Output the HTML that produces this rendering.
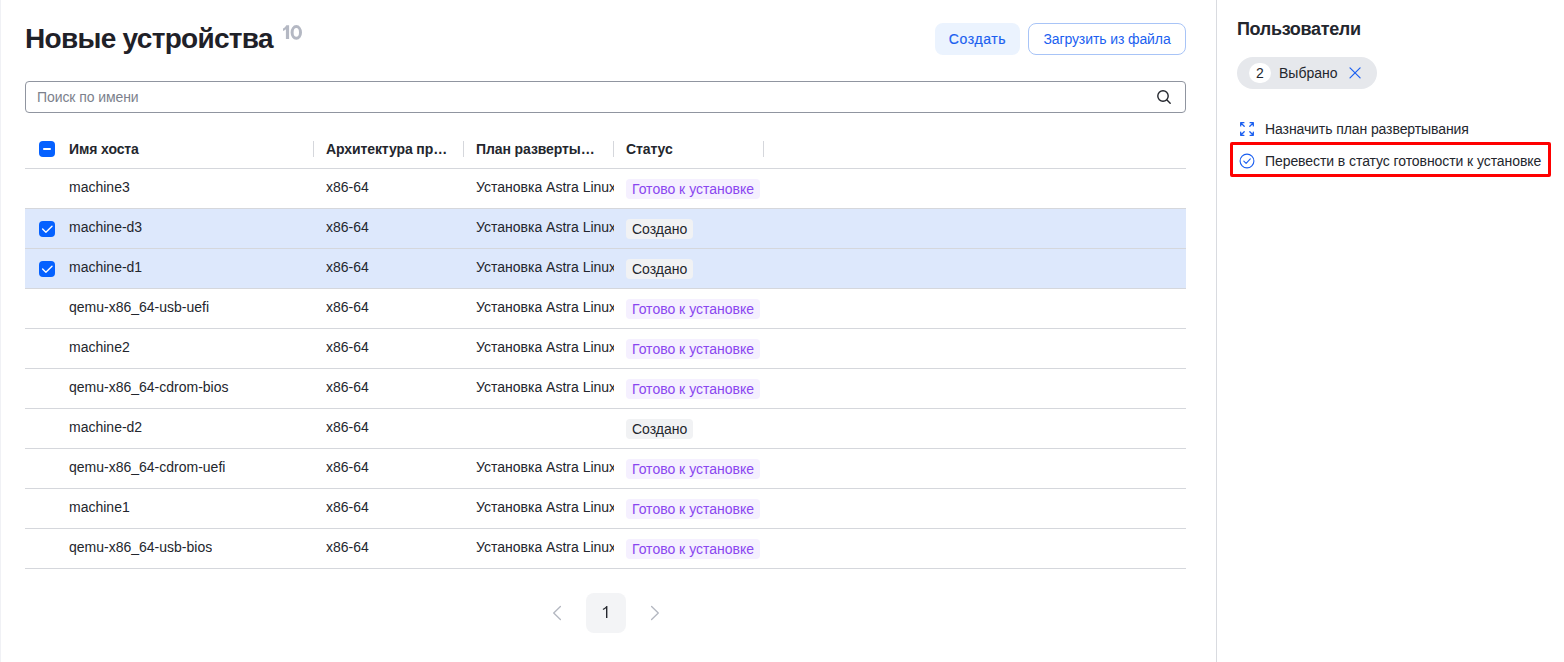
<!DOCTYPE html>
<html lang="ru">
<head>
<meta charset="utf-8">
<title>Новые устройства</title>
<style>
*{box-sizing:border-box;margin:0;padding:0}
html,body{width:1564px;height:662px;overflow:hidden;background:#fff}
body{font-family:"Liberation Sans",sans-serif;font-size:14px;color:#23262d;position:relative}
.abs{position:absolute}
#leftline{left:0;top:0;width:1px;height:662px;background:#f0f1f5}
#title{left:25px;top:21px;transform:scaleY(1.02);transform-origin:0 27px;font-size:28px;font-weight:700;line-height:36px;color:#1f2128;white-space:nowrap;letter-spacing:-0.7px}
#count{left:281px;top:22px;font-size:20px;font-weight:700;line-height:22px;color:#b3b8c2;letter-spacing:-0.5px}
.btn{top:23px;height:32px;border-radius:8px;font-size:14px;line-height:32px;text-align:center;color:#1b5ff0;white-space:nowrap}
#b1{left:935px;width:85px;background:#ebf3fe;letter-spacing:0.6px;-webkit-text-stroke:0.18px #1b5ff0}
#b2{left:1028px;width:158px;border:1px solid #a8c4f7;line-height:30px;background:#fff;letter-spacing:-0.1px}
#search{left:25px;top:81px;width:1161px;height:32px;border:1px solid #9095a0;border-radius:4px;background:#fff}
#search span{position:absolute;left:11px;top:0;line-height:30px;color:#7c818c;font-size:14px;letter-spacing:-0.08px;white-space:nowrap}
#search svg{position:absolute;right:13px;top:7px}
#thead{left:25px;top:129px;width:1161px;height:40px;border-bottom:1px solid #d5d7dc}
.th{position:absolute;top:0;height:40px;line-height:40px;font-weight:700;font-size:14px;color:#23262d;white-space:nowrap;letter-spacing:-0.1px}
.sep{position:absolute;top:12px;width:1px;height:16px;background:#d5d7dc}
.row{position:absolute;left:25px;width:1161px;height:40px;border-bottom:1px solid #d5d7dc}
.row.sel{background:#dde8fc}
.c{position:absolute;top:0;height:39px;line-height:37px;font-size:14px;color:#23262d;white-space:nowrap;overflow:hidden}
.c1{left:44px}
.c2{left:301px}
.c3{left:451px;width:138px}
.tag{position:absolute;left:601px;top:10px;height:20px;line-height:20px;border-radius:4px;padding:0 6px;font-size:14px;white-space:nowrap}
.tag.p{background:#f5f0ff;color:#8a46f0}
.tag.g{background:#f1f2f4;color:#23262d}
.cb{position:absolute;left:14px;width:16px;height:16px;border-radius:4px;background:#0561ff}
.cb svg{position:absolute;left:0;top:0}
#pg1{left:586px;top:593px;width:40px;height:40px;border-radius:8px;background:#f3f4f6;text-align:center;line-height:40px;font-size:16px;color:#23262d}
#vline{left:1216px;top:0;width:1px;height:662px;background:#d9dbe0}
#ptitle{left:1237px;top:18px;font-size:18px;font-weight:700;line-height:22px;color:#23262d;letter-spacing:-0.33px}
#chip{left:1237px;top:57px;width:140px;height:32px;border-radius:16px;background:#e6e8ec}
#chip .n{position:absolute;left:12px;top:6px;width:22px;height:20px;border-radius:10px;background:#fff;text-align:center;line-height:20px;font-size:14px}
#chip .t{position:absolute;left:42px;top:0;line-height:32px;font-size:14px}
#chip svg{position:absolute;left:111px;top:9px}
.act{font-size:14px;line-height:16px;color:#23262d;white-space:nowrap}
#red{left:1230px;top:142px;width:321px;height:35px;border:3px solid #fe0000;border-radius:2px}
</style>
</head>
<body>
<div id="leftline" class="abs"></div>
<div id="title" class="abs">Новые устройства</div>
<svg class="abs" style="left:280px;top:22px" width="26" height="20" viewBox="0 0 26 20"><path fill="#b4b8c3" d="M9.1 3.2H6.3C5.6 4.8 4.4 5.8 3 6.4V8.9C4.2 8.5 5.2 7.9 5.9 7.2V17.1H9.1Z"/><ellipse cx="16.3" cy="10.45" rx="4.2" ry="5.85" fill="none" stroke="#b4b8c3" stroke-width="3"/></svg>
<div id="b1" class="abs btn">Создать</div>
<div id="b2" class="abs btn">Загрузить из файла</div>

<div id="search" class="abs"><span>Поиск по имени</span>
<svg width="16" height="16" viewBox="0 0 16 16" fill="none" stroke="#23262d" stroke-width="1.4" stroke-linecap="round"><circle cx="7" cy="7" r="5.2"/><path d="M11 11l3.2 3.2"/></svg>
</div>

<div id="thead" class="abs">
  <div class="cb" style="top:12px"><svg width="16" height="16" viewBox="0 0 16 16"><path d="M4.9 8h6.2" stroke="#fff" stroke-width="1.8" stroke-linecap="round"/></svg></div>
  <div class="th" style="left:44px">Имя хоста</div>
  <div class="sep" style="left:288px"></div>
  <div class="th" style="left:301px">Архитектура пр…</div>
  <div class="sep" style="left:438px"></div>
  <div class="th" style="left:451px">План разверты…</div>
  <div class="sep" style="left:588px"></div>
  <div class="th" style="left:601px">Статус</div>
  <div class="sep" style="left:738px"></div>
</div>

<div class="row" style="top:169px"><div class="c c1">machine3</div><div class="c c2">x86-64</div><div class="c c3">Установка Astra Linux</div><div class="tag p">Готово к установке</div></div>
<div class="row sel" style="top:209px"><div class="cb" style="top:12px"><svg width="16" height="16" viewBox="0 0 16 16"><path d="M3.6 8.1L6.9 11.2L13 5.3" fill="none" stroke="#fff" stroke-width="1.4" stroke-linecap="round" stroke-linejoin="round"/></svg></div><div class="c c1">machine-d3</div><div class="c c2">x86-64</div><div class="c c3">Установка Astra Linux</div><div class="tag g">Создано</div></div>
<div class="row sel" style="top:249px"><div class="cb" style="top:12px"><svg width="16" height="16" viewBox="0 0 16 16"><path d="M3.6 8.1L6.9 11.2L13 5.3" fill="none" stroke="#fff" stroke-width="1.4" stroke-linecap="round" stroke-linejoin="round"/></svg></div><div class="c c1">machine-d1</div><div class="c c2">x86-64</div><div class="c c3">Установка Astra Linux</div><div class="tag g">Создано</div></div>
<div class="row" style="top:289px"><div class="c c1">qemu-x86_64-usb-uefi</div><div class="c c2">x86-64</div><div class="c c3">Установка Astra Linux</div><div class="tag p">Готово к установке</div></div>
<div class="row" style="top:329px"><div class="c c1">machine2</div><div class="c c2">x86-64</div><div class="c c3">Установка Astra Linux</div><div class="tag p">Готово к установке</div></div>
<div class="row" style="top:369px"><div class="c c1">qemu-x86_64-cdrom-bios</div><div class="c c2">x86-64</div><div class="c c3">Установка Astra Linux</div><div class="tag p">Готово к установке</div></div>
<div class="row" style="top:409px"><div class="c c1">machine-d2</div><div class="c c2">x86-64</div><div class="tag g">Создано</div></div>
<div class="row" style="top:449px"><div class="c c1">qemu-x86_64-cdrom-uefi</div><div class="c c2">x86-64</div><div class="c c3">Установка Astra Linux</div><div class="tag p">Готово к установке</div></div>
<div class="row" style="top:489px"><div class="c c1">machine1</div><div class="c c2">x86-64</div><div class="c c3">Установка Astra Linux</div><div class="tag p">Готово к установке</div></div>
<div class="row" style="top:529px"><div class="c c1">qemu-x86_64-usb-bios</div><div class="c c2">x86-64</div><div class="c c3">Установка Astra Linux</div><div class="tag p">Готово к установке</div></div>

<svg class="abs" style="left:549px;top:605px" width="16" height="16" viewBox="0 0 16 16" fill="none" stroke="#b3b7c0" stroke-width="1.3" stroke-linecap="round" stroke-linejoin="round"><path d="M11.4 1.5L4.7 8l6.7 6.5"/></svg>
<div id="pg1" class="abs"><svg width="40" height="40" viewBox="0 0 40 40" style="position:absolute;left:0;top:0"><path fill="#23262d" d="M21.4 12.9H20.4C19.8 14 18.5 15 16.9 15.7V17C18.1 16.6 19.3 16 20 15.2V25H21.4Z"/></svg></div>
<svg class="abs" style="left:647px;top:605px" width="16" height="16" viewBox="0 0 16 16" fill="none" stroke="#b3b7c0" stroke-width="1.3" stroke-linecap="round" stroke-linejoin="round"><path d="M4.6 1.5L11.3 8l-6.7 6.5"/></svg>

<div id="vline" class="abs"></div>
<div id="ptitle" class="abs">Пользователи</div>
<div id="chip" class="abs"><div class="n">2</div><div class="t">Выбрано</div>
<svg width="14" height="14" viewBox="0 0 14 14" fill="none" stroke="#1b5ff0" stroke-width="1.2" stroke-linecap="round"><path d="M2 1.8l10.1 10.1M12.1 1.8l-10.1 10.1"/></svg></div>

<svg class="abs" style="left:1240px;top:122px" width="14" height="14" viewBox="0 0 14 14" fill="none" stroke="#1b5ff0" stroke-width="1.3" stroke-linecap="round" stroke-linejoin="round"><path d="M0.7 3.9V0.7h3.2M0.7 0.7l3.5 3.5M13.3 3.9V0.7h-3.2M13.3 0.7l-3.5 3.5M0.7 10.1v3.2h3.2M0.7 13.3l3.5-3.5M13.3 10.1v3.2h-3.2M13.3 13.3l-3.5-3.5"/></svg>
<div class="abs act" style="left:1265px;top:121px;letter-spacing:-0.09px">Назначить план развертывания</div>

<svg class="abs" style="left:1239px;top:153px" width="16" height="16" viewBox="0 0 16 16" fill="none" stroke="#1b5ff0" stroke-width="1.1" stroke-linecap="round" stroke-linejoin="round"><circle cx="8" cy="8" r="6.9"/><path d="M4.8 8.1l2.3 2.3 4.2-4.5"/></svg>
<div class="abs act" style="left:1265px;top:153px;letter-spacing:-0.075px">Перевести в статус готовности к установке</div>
<div id="red" class="abs"></div>
</body>
</html>
